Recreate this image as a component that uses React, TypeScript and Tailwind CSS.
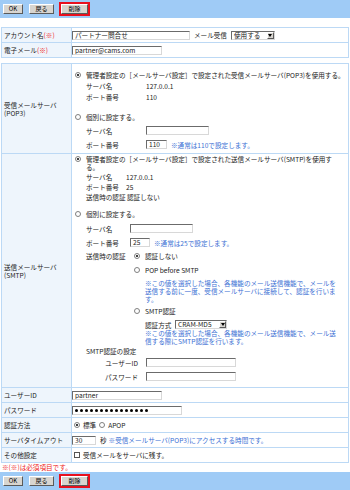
import type { ReactNode } from "react";

const blue = "text-[#3b6fd4]";

function Btn({ label, w }: { label: string; w: string }) {
  return (
    <div
      className={`${w} h-[10px] flex items-center justify-center bg-[#d8d5d0] border border-t-white border-l-white border-r-[#5a5a5a] border-b-[#5a5a5a] text-[6px] leading-none text-black`}
    >
      {label}
    </div>
  );
}

function ButtonBar() {
  return (
    <div className="h-[18px] bg-[#9fcbf6] flex items-center pl-[3px]">
      <Btn label="OK" w="w-[20px]" />
      <div className="ml-[6px]">
        <Btn label="戻る" w="w-[25px]" />
      </div>
      <div className="ml-[5px] border-2 border-[#e8101e]">
        <Btn label="削除" w="w-[27px]" />
      </div>
    </div>
  );
}

function Input({ w, value = "" }: { w: string; value?: ReactNode }) {
  return (
    <div
      className={`${w} h-[9px] shrink-0 bg-white border border-t-[#6b6b6b] border-l-[#6b6b6b] border-r-[#d8d8d8] border-b-[#d8d8d8] flex items-center pl-[2px] leading-none overflow-hidden whitespace-nowrap`}
    >
      {value}
    </div>
  );
}

function Select({ w, value }: { w: string; value: string }) {
  return (
    <div
      className={`${w} h-[9px] shrink-0 bg-white border border-t-[#6b6b6b] border-l-[#6b6b6b] border-r-[#d8d8d8] border-b-[#d8d8d8] flex items-center leading-none`}
    >
      <span className="flex-1 pl-[2px] whitespace-nowrap">{value}</span>
      <span className="w-[7px] h-[7px] shrink-0 bg-[#d8d5d0] border border-t-white border-l-white border-r-[#5a5a5a] border-b-[#5a5a5a] flex items-center justify-center">
        <svg width="4" height="3" viewBox="0 0 4 3">
          <path d="M0 0h4L2 3z" fill="#000" />
        </svg>
      </span>
    </div>
  );
}

function Radio({ checked = false }: { checked?: boolean }) {
  return (
    <span className="w-[6px] h-[6px] shrink-0 rounded-full border border-[#808080] bg-white flex items-center justify-center">
      {checked && <span className="w-[2px] h-[2px] rounded-full bg-black" />}
    </span>
  );
}

function Row({
  label,
  children,
  className = "h-[14px] flex items-center",
}: {
  label: ReactNode;
  children?: ReactNode;
  className?: string;
}) {
  return (
    <div className="flex border-b border-[#bcd9f5]">
      <div className="w-[70px] shrink-0 bg-[#eef5fc] border-r border-[#bcd9f5] flex items-center pl-[2px] whitespace-nowrap">
        {label}
      </div>
      <div className={`flex-1 min-w-0 ${className}`}>{children}</div>
    </div>
  );
}

function Req() {
  return <span className="text-[#ee2222]">(※)</span>;
}

function Line({ children, className = "" }: { children: ReactNode; className?: string }) {
  return <div className={`h-[8px] flex items-center whitespace-nowrap ${className}`}>{children}</div>;
}

function Pop3() {
  return (
    <div className="pt-[7px] pb-[4px]">
      <Line className="pl-[3px] gap-[5px]">
        <Radio checked />
        <span>管理者設定の［メールサーバ設定］で設定された受信メールサーバ(POP3)を使用する。</span>
      </Line>
      <Line className="mt-[3px] pl-[14px]">
        <span className="w-[60px]">サーバ名</span>
        <span>127.0.0.1</span>
      </Line>
      <Line className="mt-[3px] pl-[14px]">
        <span className="w-[60px]">ポート番号</span>
        <span>110</span>
      </Line>
      <Line className="mt-[12px] pl-[3px] gap-[5px]">
        <Radio />
        <span>個別に設定する。</span>
      </Line>
      <div className="mt-[5px] h-[9px] flex items-center pl-[14px]">
        <span className="w-[60px]">サーバ名</span>
        <Input w="w-[63px]" />
      </div>
      <div className="mt-[5px] h-[9px] flex items-center pl-[14px] whitespace-nowrap">
        <span className="w-[60px]">ポート番号</span>
        <Input w="w-[21px]" value="110" />
        <span className={`ml-[4px] ${blue}`}>※通常は110で設定します。</span>
      </div>
    </div>
  );
}

function Smtp() {
  return (
    <div className="pt-[1px] pb-[6px]">
      <div className="flex items-start pl-[3px] gap-[5px] whitespace-nowrap">
        <span className="mt-[1px]">
          <Radio checked />
        </span>
        <div>
          <Line>管理者設定の［メールサーバ設定］で設定された送信メールサーバ(SMTP)を使用す</Line>
          <Line>る。</Line>
        </div>
      </div>
      <Line className="mt-[2px] pl-[14px]">
        <span className="w-[40px]">サーバ名</span>
        <span>127.0.0.1</span>
      </Line>
      <Line className="mt-[2px] pl-[14px]">
        <span className="w-[40px]">ポート番号</span>
        <span>25</span>
      </Line>
      <Line className="mt-[2px] pl-[14px]">
        <span className="w-[41px]">送信時の認証</span>
        <span>認証しない</span>
      </Line>
      <Line className="mt-[9px] pl-[3px] gap-[5px]">
        <Radio />
        <span>個別に設定する。</span>
      </Line>
      <div className="mt-[6px] h-[9px] flex items-center pl-[14px]">
        <span className="w-[44px]">サーバ名</span>
        <Input w="w-[63px]" />
      </div>
      <div className="mt-[5px] h-[9px] flex items-center pl-[14px] whitespace-nowrap">
        <span className="w-[44px]">ポート番号</span>
        <Input w="w-[20px]" value="25" />
        <span className={`ml-[4px] ${blue}`}>※通常は25で設定します。</span>
      </div>
      <Line className="mt-[5px] pl-[14px]">
        <span className="w-[48px]">送信時の認証</span>
        <Radio checked />
        <span className="ml-[5px]">認証しない</span>
      </Line>
      <Line className="mt-[6px] pl-[62px]">
        <Radio />
        <span className="ml-[5px]">POP before SMTP</span>
      </Line>
      <div className={`mt-[5px] pl-[73px] ${blue}`}>
        <Line>※この値を選択した場合、各機能のメール送信機能で、メールを</Line>
        <Line>送信する前に一度、受信メールサーバに接続して、認証を行いま</Line>
        <Line>す。</Line>
      </div>
      <Line className="mt-[4px] pl-[62px]">
        <Radio />
        <span className="ml-[5px]">SMTP認証</span>
      </Line>
      <div className="mt-[5px] h-[9px] flex items-center pl-[73px]">
        <span className="w-[30px]">認証方式</span>
        <Select w="w-[52px]" value="CRAM-MD5" />
      </div>
      <div className={`pl-[73px] ${blue}`}>
        <Line>※この値を選択した場合、各機能のメール送信機能で、メール送</Line>
        <Line>信する際にSMTP認証を行います。</Line>
      </div>
      <Line className="mt-[2px] pl-[14px]">SMTP認証の設定</Line>
      <div className="mt-[3px] h-[9px] flex items-center pl-[14px]">
        <span className="w-[60px] text-right pr-[8px]">ユーザーID</span>
        <Input w="w-[90px]" />
      </div>
      <div className="mt-[5px] h-[9px] flex items-center pl-[14px]">
        <span className="w-[60px] text-right pr-[8px]">パスワード</span>
        <Input w="w-[90px]" />
      </div>
    </div>
  );
}

const dots = Array.from({ length: 15 }, (_, i) => i);

export default function App() {
  return (
    <div className="w-[350px] h-[490px] bg-white text-[#222] text-[6.6px] leading-[8px] font-['Noto_Sans_CJK_JP','Noto_Sans',sans-serif] overflow-hidden">
      <ButtonBar />

      <div className="mt-[9px] mx-px border-t border-x border-[#bcd9f5]">
        <Row
          label={
            <span>
              アカウント名
              <Req />
            </span>
          }
        >
          <Input w="w-[118px]" value="パートナー問合せ" />
          <span className="ml-[4px] whitespace-nowrap">メール受信</span>
          <span className="ml-[4px]">
            <Select w="w-[44px]" value="使用する" />
          </span>
        </Row>
        <Row
          label={
            <span>
              電子メール
              <Req />
            </span>
          }
        >
          <Input w="w-[90px]" value="partner@cams.com" />
        </Row>
      </div>

      <div className="mt-[5px] mx-px border-t border-x border-[#bcd9f5]">
        <Row
          label={
            <div>
              <Line>受信メールサーバ</Line>
              <Line>(POP3)</Line>
            </div>
          }
          className=""
        >
          <Pop3 />
        </Row>
        <Row
          label={
            <div>
              <Line>送信メールサーバ</Line>
              <Line>(SMTP)</Line>
            </div>
          }
          className=""
        >
          <Smtp />
        </Row>
        <Row label="ユーザーID">
          <Input w="w-[90px]" value="partner" />
        </Row>
        <Row label="パスワード">
          <Input
            w="w-[110px]"
            value={
              <span className="flex items-center gap-[2px]">
                {dots.map((i) => (
                  <span key={i} className="w-[3px] h-[3px] rounded-full bg-black" />
                ))}
              </span>
            }
          />
        </Row>
        <Row label="認証方法">
          <span className="ml-[2px]">
            <Radio checked />
          </span>
          <span className="ml-[3px]">標準</span>
          <span className="ml-[3px]">
            <Radio />
          </span>
          <span className="ml-[3px]">APOP</span>
        </Row>
        <Row label="サーバタイムアウト">
          <Input w="w-[24px]" value="30" />
          <span className="ml-[4px]">秒</span>
          <span className={`ml-[2px] whitespace-nowrap ${blue}`}>
            ※受信メールサーバ(POP3)にアクセスする時間です。
          </span>
        </Row>
        <Row label="その他設定">
          <span className="ml-[2px] w-[6px] h-[6px] border border-[#555] bg-white" />
          <span className="ml-[3px] whitespace-nowrap">受信メールをサーバに残す。</span>
        </Row>
      </div>

      <div className="h-[8px] pl-[2px] flex items-center text-[#ee2222]">※(※)は必須項目です。</div>

      <div className="mt-[1px]">
        <ButtonBar />
      </div>
    </div>
  );
}
